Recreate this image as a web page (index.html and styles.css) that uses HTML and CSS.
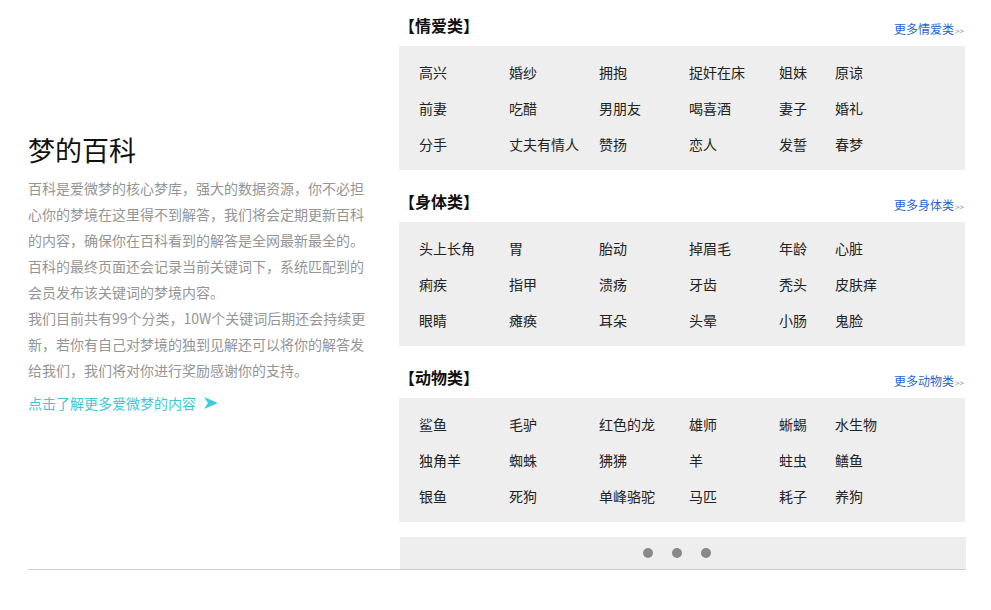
FILE: index.html
```html
<!DOCTYPE html>
<html lang="zh-CN">
<head>
<meta charset="utf-8">
<title>梦的百科</title>
<link rel="stylesheet" href="styles.css">
</head>
<body>
<div class="wrap">
  <div class="intro">
    <h1 class="intro-title">梦的百科</h1>
    <p class="intro-text">百科是爱微梦的核心梦库，强大的数据资源，你不必担心你的梦境在这里得不到解答，我们将会定期更新百科的内容，确保你在百科看到的解答是全网最新最全的。百科的最终页面还会记录当前关键词下，系统匹配到的会员发布该关键词的梦境内容。</p>
    <p class="intro-text">我们目前共有99个分类，10W个关键词后期还会持续更<br>新，若你有自己对梦境的独到见解还可以将你的解答发给我们，我们将对你进行奖励感谢你的支持。</p>
    <a class="intro-link" href="#">点击了解更多爱微梦的内容
      <svg class="arrow" width="14" height="12" viewBox="0 0 14 12"><path d="M0 0 L14 6 L0 12 L4 6 Z" fill="#3ccbdc"/></svg>
    </a>
  </div>
  <div class="cats">
    <div class="cat">
      <div class="cat-head"><h2 class="cat-title">【情爱类】</h2><a class="more" href="#">更多情爱类<span class="gt">&gt;&gt;</span></a></div>
      <ul class="cat-box">
        <li>高兴</li><li>婚纱</li><li>拥抱</li><li>捉奸在床</li><li>姐妹</li><li>原谅</li>
        <li>前妻</li><li>吃醋</li><li>男朋友</li><li>喝喜酒</li><li>妻子</li><li>婚礼</li>
        <li>分手</li><li>丈夫有情人</li><li>赞扬</li><li>恋人</li><li>发誓</li><li>春梦</li>
      </ul>
    </div>
    <div class="cat">
      <div class="cat-head"><h2 class="cat-title">【身体类】</h2><a class="more" href="#">更多身体类<span class="gt">&gt;&gt;</span></a></div>
      <ul class="cat-box">
        <li>头上长角</li><li>胃</li><li>胎动</li><li>掉眉毛</li><li>年龄</li><li>心脏</li>
        <li>痢疾</li><li>指甲</li><li>溃疡</li><li>牙齿</li><li>秃头</li><li>皮肤痒</li>
        <li>眼睛</li><li>瘫痪</li><li>耳朵</li><li>头晕</li><li>小肠</li><li>鬼脸</li>
      </ul>
    </div>
    <div class="cat">
      <div class="cat-head"><h2 class="cat-title">【动物类】</h2><a class="more" href="#">更多动物类<span class="gt">&gt;&gt;</span></a></div>
      <ul class="cat-box">
        <li>鲨鱼</li><li>毛驴</li><li>红色的龙</li><li>雄师</li><li>蜥蜴</li><li>水生物</li>
        <li>独角羊</li><li>蜘蛛</li><li>狒狒</li><li>羊</li><li>蛀虫</li><li>鳝鱼</li>
        <li>银鱼</li><li>死狗</li><li>单峰骆驼</li><li>马匹</li><li>耗子</li><li>养狗</li>
      </ul>
    </div>
    <div class="pager">
      <span class="dot"></span><span class="dot"></span><span class="dot"></span>
    </div>
  </div>
</div>
</body>
</html>
```

FILE: styles.css
```css
* { box-sizing: border-box; }
html, body { margin: 0; padding: 0; background: #fff; }
body {
  font-family: "Noto Sans CJK SC", "Microsoft YaHei", sans-serif;
  color: #222;
}
.wrap {
  margin-left: 28px;
  width: 938px;
  display: flex;
  border-bottom: 1px solid #cccccc;
  box-shadow: 0 5px 6px -3px rgba(0, 0, 0, 0.05);
}
.intro {
  width: 371px;
  padding-top: 133px;
}
.intro-title {
  margin: 0 0 8px;
  font-size: 27px;
  line-height: 34px;
  font-weight: normal;
  color: #111;
}
.intro-text {
  width: 338px;
  margin: 0;
  font-size: 14px;
  line-height: 26px;
  color: #959595;
  word-break: break-all;
}
.intro-link {
  display: flex;
  align-items: center;
  gap: 8px;
  margin-top: 7px;
  font-size: 14px;
  line-height: 26px;
  color: #3ec8dc;
  text-decoration: none;
}
.arrow { display: block; }
.cats { width: 567px; }
.cat-head {
  height: 46px;
  display: flex;
  justify-content: space-between;
  align-items: center;
  padding: 4px 2px 0 0;
}
.cat + .cat .cat-head { height: 52px; padding-top: 10px; }
.cat-title {
  margin: 0;
  font-size: 16px;
  font-weight: bold;
  color: #111;
  line-height: 22px;
}
.more {
  font-size: 12px;
  color: #1f66cf;
  text-decoration: none;
  padding-top: 6px;
}
.gt {
  font-size: 8px;
  color: #6b8fc6;
  margin-left: 1px;
}
.cat-box {
  list-style: none;
  margin: 0;
  width: 566px;
  height: 124px;
  padding: 8px 0 8px 20px;
  background: #eeeeee;
  display: grid;
  grid-template-columns: 90px 90px 90px 90px 56px auto;
  grid-auto-rows: 36px;
  align-items: center;
  font-size: 14px;
  color: #222;
}
.pager {
  margin: 15px 0 0 1px;
  height: 32px;
  width: 566px;
  background: #eeeeee;
  display: flex;
  align-items: center;
  justify-content: center;
  gap: 19px;
  padding: 0 12px 0 0;
}
.dot {
  width: 10px;
  height: 10px;
  border-radius: 50%;
  background: #888888;
}
```
